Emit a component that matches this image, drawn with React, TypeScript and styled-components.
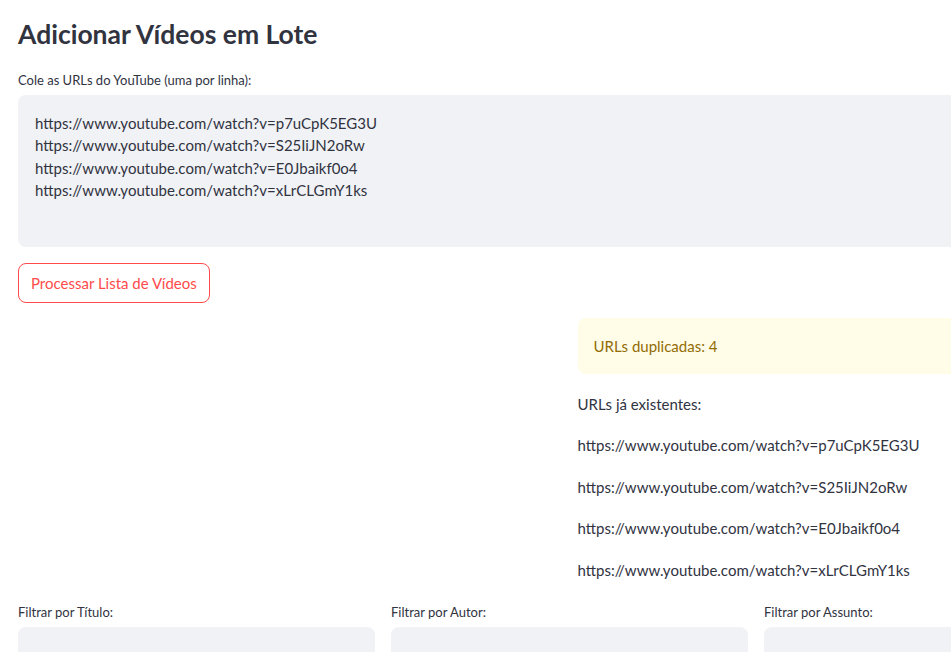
import { FC } from 'react';
import styled, { createGlobalStyle } from 'styled-components';

const GlobalStyle = createGlobalStyle`
  html, body {
    margin: 0;
    padding: 0;
    background: #ffffff;
    overflow: hidden;
  }
  body {
    font-family: Lato, "Noto Sans", sans-serif;
    color: #31333f;
  }
  * { box-sizing: border-box; }
`;

const Page = styled.div`
  width: 1139px;
  padding: 0 18px;
  display: flex;
  flex-direction: column;
`;

const Title = styled.h2`
  margin: 16px 0 0;
  font-size: 26.5px;
  font-weight: 700;
  line-height: 36px;
  color: #31333f;
`;

const Label = styled.label`
  display: block;
  font-size: 13px;
  line-height: 18px;
  color: #31333f;
  margin-bottom: 6px;
`;

const Field = styled.div<{ $top?: number }>`
  margin-top: ${(p) => p.$top ?? 0}px;
`;

const TextArea = styled.div`
  background: #f0f2f6;
  border-radius: 8px;
  height: 152px;
  padding: 17px 17px;
  font-size: 15px;
  line-height: 22.3px;
  white-space: pre;
`;

const OutlineButton = styled.button`
  margin-top: 16px;
  align-self: flex-start;
  height: 40px;
  padding: 0 12px;
  border: 1px solid #ff4b4b;
  border-radius: 8px;
  background: #ffffff;
  color: #ff4b4b;
  font-family: inherit;
  font-size: 15px;
`;

const Columns = styled.div<{ $count: number }>`
  display: grid;
  grid-template-columns: repeat(${(p) => p.$count}, 1fr);
  gap: 16px;
`;

const Stack = styled.div`
  display: flex;
  flex-direction: column;
`;

const Warning = styled.div`
  margin-top: 15px;
  height: 56px;
  display: flex;
  align-items: center;
  padding: 0 16px;
  border-radius: 8px;
  background: #fffce7;
  color: #926c05;
  font-size: 15px;
`;

const Para = styled.p<{ $gap: number }>`
  margin: ${(p) => p.$gap}px 0 0;
  font-size: 15px;
  line-height: 24px;
`;

const Input = styled.div`
  height: 40px;
  background: #f0f2f6;
  border-radius: 8px;
`;

const urls = [
  'https://www.youtube.com/watch?v=p7uCpK5EG3U',
  'https://www.youtube.com/watch?v=S25IiJN2oRw',
  'https://www.youtube.com/watch?v=E0Jbaikf0o4',
  'https://www.youtube.com/watch?v=xLrCLGmY1ks',
];

const filters = ['Filtrar por Título:', 'Filtrar por Autor:', 'Filtrar por Assunto:'];

const App: FC = () => {
  return (
    <>
      <GlobalStyle />
      <Page>
        <Title>Adicionar Vídeos em Lote</Title>
        <Field $top={19}>
          <Label>Cole as URLs do YouTube (uma por linha):</Label>
          <TextArea>{urls.join('\n')}</TextArea>
        </Field>
        <OutlineButton>Processar Lista de Vídeos</OutlineButton>
        <Columns $count={2}>
          <div />
          <Stack>
            <Warning>URLs duplicadas: 4</Warning>
            <Para $gap={17.5}>URLs já existentes:</Para>
            {urls.map((u) => (
              <Para key={u} $gap={17.5}>{u}</Para>
            ))}
          </Stack>
        </Columns>
        <Columns $count={3}>
          {filters.map((f) => (
            <Field key={f} $top={21}>
              <Label>{f}</Label>
              <Input />
            </Field>
          ))}
        </Columns>
      </Page>
    </>
  );
};

export default App;
